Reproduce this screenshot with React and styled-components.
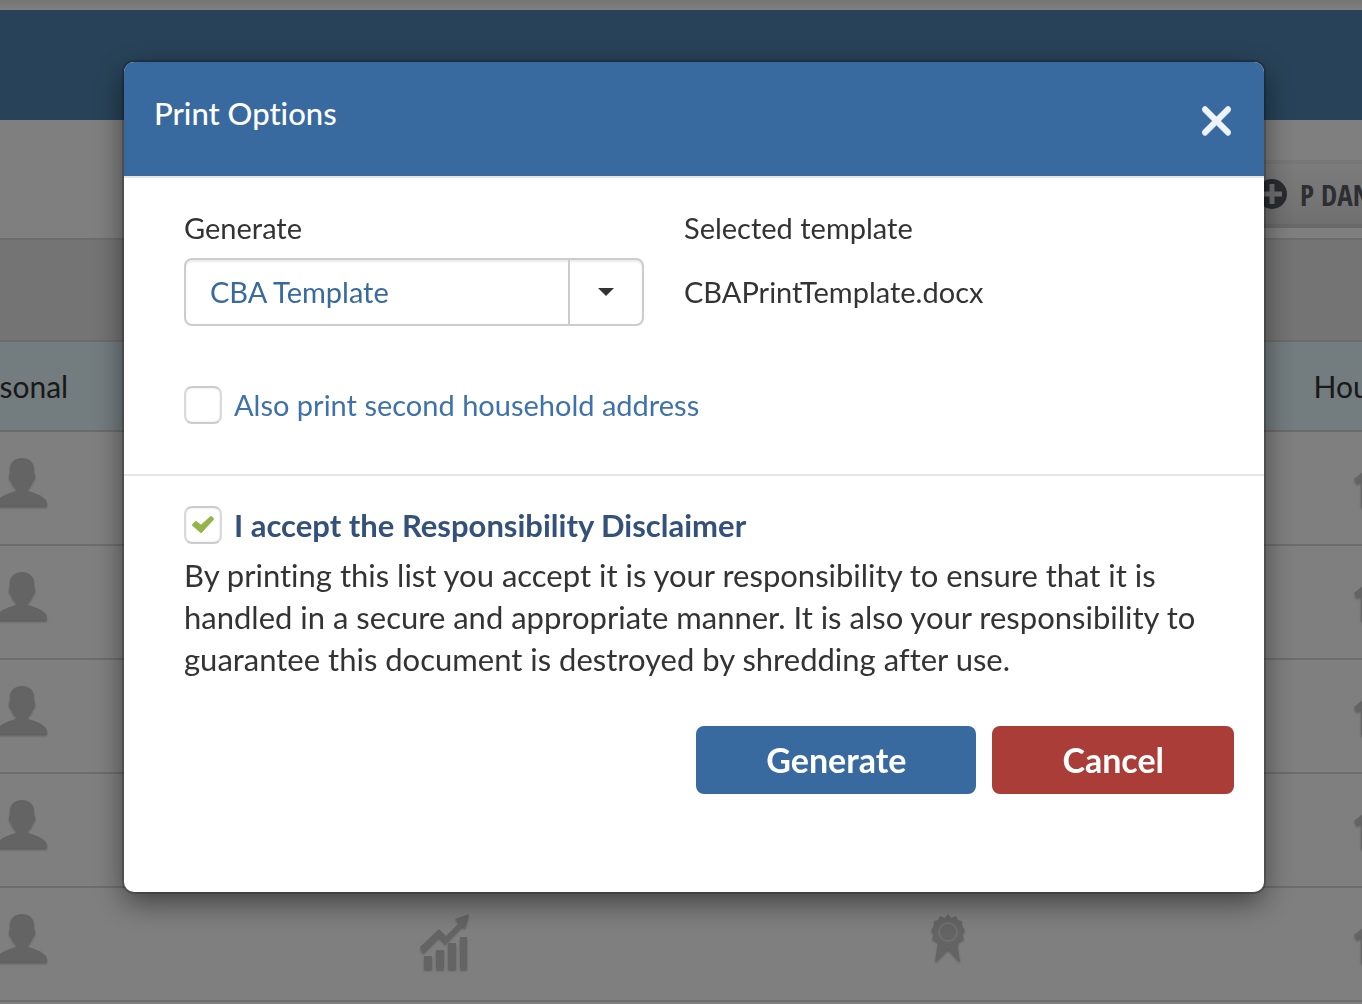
import React, { useState } from 'react';
import styled, { createGlobalStyle } from 'styled-components';

const GlobalStyle = createGlobalStyle`
  * {
    box-sizing: border-box;
  }

  body {
    margin: 0;
    overflow: hidden;
    background-color: #fff;
    color: #333;
    font-family: Lato, "Open Sans", sans-serif;
    font-size: 31px;
    font-variant-ligatures: none;
    line-height: 42px;
  }
`;

const Page = styled.div`
  overflow: hidden;
`;

const TopStrip = styled.div`
  height: 10px;
  background: linear-gradient(#ececec, #fff);
`;

const Banner = styled.div`
  height: 110px;
  background-color: #5086b2;
`;

const Toolbar = styled.div`
  display: flex;
  justify-content: flex-end;
  padding: 40px 0 10px;
  overflow: hidden;
`;

const AddButton = styled.button`
  display: flex;
  align-items: center;
  justify-content: flex-start;
  gap: 12px;
  flex: 0 0 130px;
  min-width: 0;
  height: 68px;
  padding: 0 0 0 24px;
  border: 0;
  border-top: 4px solid #eee;
  border-bottom: 4px solid #d2d2d2;
  background: linear-gradient(#f8f8f8, #e0e0e0);
  color: #5a5c64;
  font-family: "Open Sans Condensed", "Roboto Condensed", "Liberation Sans Narrow", sans-serif;
  font-size: 29px;
  font-weight: 700;
  white-space: nowrap;

  svg {
    flex: none;
  }
`;

const FilterBar = styled.div`
  height: 102px;
  border-top: 2px solid #dadada;
  background-color: #e8e8e8;
`;

const Table = styled.table`
  width: calc(100% + 346px);
  margin-left: -200px;
  border-collapse: separate;
  border-spacing: 0;
  table-layout: fixed;
`;

const HeadCell = styled.th`
  width: ${({ $width }) => $width};
  height: 92px;
  padding: ${({ $padding }) => $padding || '0'};
  border-top: 2px solid #d6d6d6;
  border-bottom: 2px solid #d6d6d6;
  background-color: #e6f8fe;
  font-size: 30px;
  font-weight: 400;
`;

const Cell = styled.td`
  height: 114px;
  padding: 26px 0 0;
  border-bottom: 2px solid #dadada;
  color: #c8c8c8;
  vertical-align: top;

  svg {
    display: block;
    margin: 0 auto;
    filter: drop-shadow(0 2px 1px #bbb);
  }
`;

const Backdrop = styled.div`
  position: fixed;
  inset: 0;
  padding: 62px 98px 62px 124px;
  background-color: rgba(0, 0, 0, 0.5);
`;

const Dialog = styled.div`
  overflow: hidden;
  border-radius: 10px;
  background-color: #fff;
  box-shadow: 0 0 0 2px rgba(0, 0, 0, 0.2), 0 10px 30px rgba(0, 0, 0, 0.5);
`;

const DialogHeader = styled.header`
  display: flex;
  justify-content: space-between;
  padding: 30px;
  border-bottom: 2px solid #e5e5e5;
  background-color: #386a9f;
  background-clip: padding-box;
`;

const Title = styled.h1`
  margin: 0;
  color: #fff;
  font-size: 31px;
  font-weight: 500;
`;

const CloseButton = styled.button`
  width: 36px;
  height: 50px;
  margin-top: 4px;
  padding: 0;
  border: 0;
  background: none;
  cursor: pointer;

  svg {
    display: block;
  }
`;

const Section = styled.section`
  padding: 30px 60px 50px;
  border-bottom: 2px solid #e5e5e5;
`;

const Fields = styled.div`
  display: grid;
  grid-template-columns: 460px 1fr;
  gap: 10px 40px;
  align-items: center;
  margin-bottom: 60px;
  font-size: 29px;
  line-height: 40px;
`;

const SelectBox = styled.div`
  display: grid;
  grid-template-columns: 1fr 76px;
`;

const Select = styled.select`
  grid-area: 1 / 1 / 2 / 3;
  height: 68px;
  padding: 0 24px 2px;
  border: 2px solid #ccc;
  border-radius: 8px;
  appearance: none;
  background-color: #fff;
  box-shadow: inset 0 2px 2px rgba(0, 0, 0, 0.08);
  color: #386a9f;
  font-family: inherit;
  font-size: 29px;
  font-variant-ligatures: none;
`;

const Caret = styled.span`
  grid-area: 1 / 2;
  display: flex;
  align-items: center;
  justify-content: center;
  margin: 2px 2px 2px 0;
  border-left: 2px solid #ccc;
  color: #333;
  pointer-events: none;
`;

const CheckRow = styled.label`
  display: flex;
  align-items: center;
  gap: 12px;
  height: 38px;
  color: ${({ $strong }) => ($strong ? '#34517a' : '#3f72aa')};
  font-size: ${({ $strong }) => ($strong ? '31px' : '29px')};
  font-weight: ${({ $strong }) => ($strong ? 700 : 400)};
`;

const CheckBox = styled.span`
  display: grid;
  place-items: center;

  > * {
    grid-area: 1 / 1;
  }

  svg {
    pointer-events: none;
  }
`;

const CheckInput = styled.input`
  width: 38px;
  height: 38px;
  margin: 0;
  border: 2px solid #ccc;
  border-right-color: #d9d9d9;
  border-left-color: #d9d9d9;
  border-radius: 8px;
  appearance: none;
  background-color: #fff;
  box-shadow: inset 0 0 2px rgba(0, 0, 0, 0.15);
`;

const Disclaimer = styled.section`
  padding: 30px 30px 98px 60px;
`;

const DisclaimerText = styled.p`
  margin: 10px 0 46px;
`;

const Actions = styled.div`
  display: flex;
  justify-content: flex-end;
  gap: 16px;
`;

const ActionButton = styled.button`
  height: 68px;
  padding: 0 70px 2px;
  border: 0;
  border-radius: 8px;
  background-color: ${({ $danger }) => ($danger ? '#aa3d37' : '#386a9f')};
  color: #fff;
  font-family: inherit;
  font-size: 34px;
  font-weight: 700;
  cursor: pointer;
`;

const PersonIcon = () => (
  <svg width="50" height="50" viewBox="0 1 50 50" fill="currentColor">
    <path d="M24 1c7 0 12 4 12 11v4c2 2 1 6-1 7-1 4-3 6-5 8v3c7 2 13 4 17 8 2 2 2 4 2 7H-1c0-3 0-5 2-7 4-4 10-6 17-8v-3c-2-2-4-4-5-8-2-1-3-5-1-7v-4C12 5 17 1 24 1z" />
  </svg>
);

const ChartIcon = () => (
  <svg width="50" height="56" viewBox="0 0 50 56" fill="currentColor">
    <path d="M4 42h8v13H4zM16 36h8v19h-8zM28 29h8v26h-8zM40 23h7v32h-7z" />
    <path d="M0 33 19 15l7 7L39 9l-4-4L49 0l-4 14-3-2-17 18-6-7L3 39z" />
  </svg>
);

const RibbonIcon = () => (
  <svg width="34" height="50" viewBox="0 0 34 50" fill="currentColor">
    <path d="m17 0 3 4 5-2 2 4 4 1v5l3 4-3 4 2 5-5 2-2 4-4 1-5 2-5-2-4-1-2-4-5-2 2-5-3-4 3-4V7l4-1 2-4 5 2z" />
    <path d="m7 28-3 20 13-13 12 13-3-20-9 4z" />
    <circle cx="17" cy="18" r="9" fill="none" stroke="#dedede" strokeWidth="2" />
  </svg>
);

const HouseIcon = () => (
  <svg width="52" height="50" viewBox="0 0 52 50" fill="currentColor">
    <path d="M26 0 0 21l3 5 4-3v26h14V33h10v16h14V23l4 3 3-5z" />
  </svg>
);

const PlusIcon = () => (
  <svg width="32" height="32" viewBox="0 0 32 32">
    <circle cx="16" cy="16" r="15" fill="#55575e" />
    <path d="M16 6v20M6 16h20" stroke="#e2e2e2" strokeWidth="5" />
  </svg>
);

const CloseIcon = () => (
  <svg width="36" height="50" viewBox="0 0 36 50" fill="none" strokeWidth="5.5" strokeLinecap="round">
    <path d="m7 14 23 23M30 14 7 37" stroke="#d3dfeb" />
    <path d="m7 13 23 23M30 13 7 36" stroke="#eef3f8" />
  </svg>
);

const TickIcon = () => (
  <svg width="24" height="20" viewBox="0 0 24 20">
    <path d="m2 10 3-3 5 4L20 2l2 2-12 13z" fill="#96b44a" stroke="#96b44a" strokeWidth="2" strokeLinejoin="round" />
  </svg>
);

const Checkbox = ({ label, checked, onChange, strong }) => (
  <CheckRow $strong={strong}>
    <CheckBox>
      <CheckInput
        type="checkbox"
        checked={checked}
        onChange={(e) => onChange(e.target.checked)}
      />
      {checked && <TickIcon />}
    </CheckBox>
    {label}
  </CheckRow>
);

const ROWS = [1, 2, 3, 4, 5];

const HouseholdPage = () => (
  <Page>
    <TopStrip />
    <Banner />
    <Toolbar>
      <AddButton>
        <PlusIcon />
        P DAN
      </AddButton>
    </Toolbar>
    <FilterBar />
    <Table>
      <thead>
        <tr>
          <HeadCell $width="26.1%" $padding="0 22px 0 0">Personal</HeadCell>
          <HeadCell $width="23.3%" />
          <HeadCell $width="35.6%" />
          <HeadCell $width="15%" $padding="0 0 0 10px">Household</HeadCell>
        </tr>
      </thead>
      <tbody>
        {ROWS.map((row) => (
          <tr key={row}>
            <Cell><PersonIcon /></Cell>
            <Cell><ChartIcon /></Cell>
            <Cell><RibbonIcon /></Cell>
            <Cell><HouseIcon /></Cell>
          </tr>
        ))}
      </tbody>
    </Table>
  </Page>
);

const App = () => {
  const [secondAddress, setSecondAddress] = useState(false);
  const [accepted, setAccepted] = useState(true);

  return (
    <>
      <GlobalStyle />
      <HouseholdPage />
      <Backdrop>
        <Dialog role="dialog" aria-labelledby="print-title">
          <DialogHeader>
            <Title id="print-title">Print Options</Title>
            <CloseButton aria-label="Close">
              <CloseIcon />
            </CloseButton>
          </DialogHeader>
          <Section>
            <Fields>
              <label htmlFor="template">Generate</label>
              <span>Selected template</span>
              <SelectBox>
                <Select id="template">
                  <option>CBA Template</option>
                </Select>
                <Caret>
                  <svg width="16" height="8" viewBox="0 0 16 8" fill="currentColor">
                    <path d="M0 0h16L8 8z" />
                  </svg>
                </Caret>
              </SelectBox>
              <span>CBAPrintTemplate.docx</span>
            </Fields>
            <Checkbox
              label="Also print second household address"
              checked={secondAddress}
              onChange={setSecondAddress}
            />
          </Section>
          <Disclaimer>
            <Checkbox
              label="I accept the Responsibility Disclaimer"
              checked={accepted}
              onChange={setAccepted}
              strong
            />
            <DisclaimerText>
              By printing this list you accept it is your responsibility to ensure that it is
              handled in a secure and appropriate manner. It is also your responsibility to
              guarantee this document is destroyed by shredding after use.
            </DisclaimerText>
            <Actions>
              <ActionButton>Generate</ActionButton>
              <ActionButton $danger>Cancel</ActionButton>
            </Actions>
          </Disclaimer>
        </Dialog>
      </Backdrop>
    </>
  );
};

export default App;
